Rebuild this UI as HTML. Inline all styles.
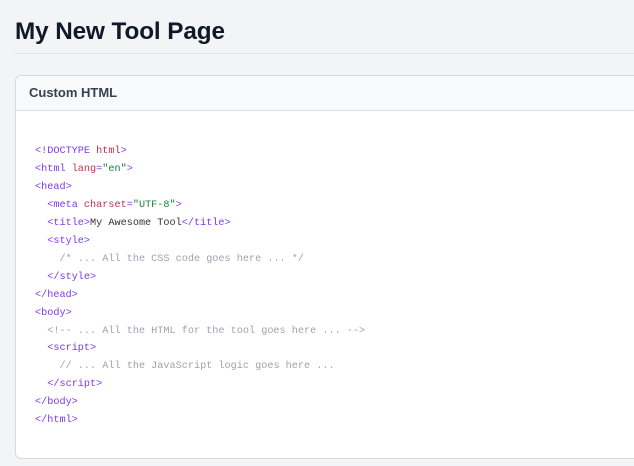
<!DOCTYPE html>
<html><head><style>
body{margin:0;background:#f3f4f6;width:634px;height:466px;overflow:hidden;font-family:"Liberation Sans",sans-serif;position:relative}
h1{position:absolute;left:15px;top:18px;margin:0;font-size:24.3px;font-weight:bold;color:#111827;letter-spacing:-0.1px}
.hr{position:absolute;left:15px;right:0;top:53px;height:1px;background:#e2e4e8}
.card{position:absolute;left:15px;top:75px;width:640px;height:382px;background:#fff;border:1px solid #d6d9de;border-radius:6px}
.hd{height:34px;background:#f8f9fa;border-bottom:1px solid #dcdfe3;border-radius:6px 6px 0 0;font-weight:bold;font-size:13px;color:#374151;line-height:34px;padding-left:13px}
pre{margin:0;position:absolute;left:19px;top:67px;font-family:"Liberation Mono","DejaVu Sans Mono",monospace;font-size:10.2px;line-height:17.95px;color:#555}
.t{color:#7c3aed}.a{color:#c0304f}.v{color:#15803d}.c{color:#9ca3af}
</style></head><body>
<h1>My New Tool Page</h1><div class="hr"></div>
<div class="card"><div class="hd">Custom HTML</div>
<pre><span class="t">&lt;!DOCTYPE </span><span class="a">html</span><span class="t">&gt;</span>
<span class="t">&lt;html </span><span class="a">lang</span><span class="t">=</span><span class="v">"en"</span><span class="t">&gt;</span>
<span class="t">&lt;head&gt;</span>
  <span class="t">&lt;meta </span><span class="a">charset</span><span class="t">=</span><span class="v">"UTF-8"</span><span class="t">&gt;</span>
  <span class="t">&lt;title&gt;</span><span style="color:#333">My Awesome Tool</span><span class="t">&lt;/title&gt;</span>
  <span class="t">&lt;style&gt;</span>
    <span class="c">/* ... All the CSS code goes here ... */</span>
  <span class="t">&lt;/style&gt;</span>
<span class="t">&lt;/head&gt;</span>
<span class="t">&lt;body&gt;</span>
  <span class="c">&lt;!-- ... All the HTML for the tool goes here ... --&gt;</span>
  <span class="t">&lt;script&gt;</span>
    <span class="c">// ... All the JavaScript logic goes here ...</span>
  <span class="t">&lt;/script&gt;</span>
<span class="t">&lt;/body&gt;</span>
<span class="t">&lt;/html&gt;</span></pre>
</div>
</body></html>
